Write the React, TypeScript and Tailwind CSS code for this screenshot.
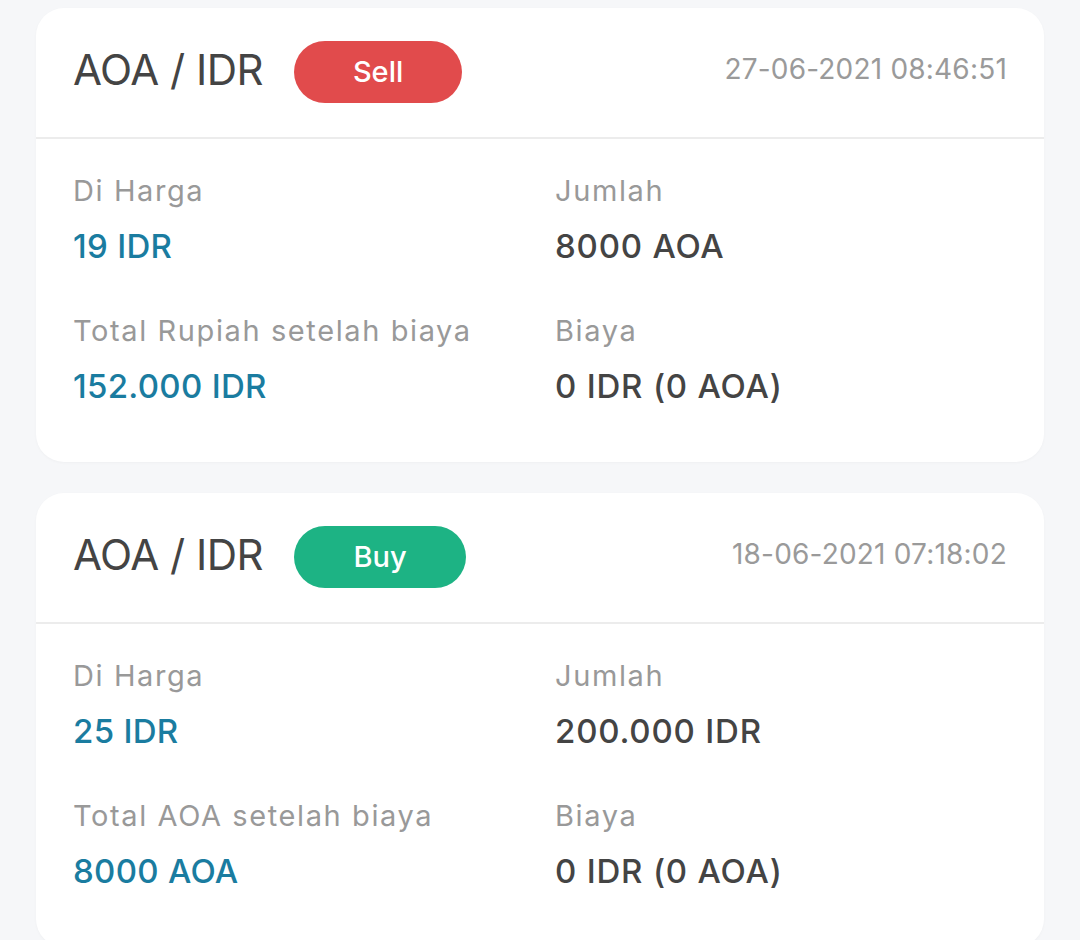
import React from "react";

type Row = { label: string; value: string; accent?: boolean };
type Trade = {
  side: "Sell" | "Buy";
  date: string;
  rows: Row[];
};

const trades: Trade[] = [
  {
    side: "Sell",
    date: "27-06-2021 08:46:51",
    rows: [
      { label: "Di Harga", value: "19 IDR", accent: true },
      { label: "Jumlah", value: "8000 AOA" },
      { label: "Total Rupiah setelah biaya", value: "152.000 IDR", accent: true },
      { label: "Biaya", value: "0 IDR (0 AOA)" },
    ],
  },
  {
    side: "Buy",
    date: "18-06-2021 07:18:02",
    rows: [
      { label: "Di Harga", value: "25 IDR", accent: true },
      { label: "Jumlah", value: "200.000 IDR" },
      { label: "Total AOA setelah biaya", value: "8000 AOA", accent: true },
      { label: "Biaya", value: "0 IDR (0 AOA)" },
    ],
  },
];

function Card({ t }: { t: Trade }) {
  return (
    <div className="bg-white rounded-[28px] shadow-[0_1px_3px_rgba(0,0,0,0.03)]">
      <div className="flex items-start justify-between pl-[37px] pr-[37px] pt-[33px] pb-[34px] border-b-2 border-[#ececec]">
        <div className="flex items-start">
          <span className="text-[42px] leading-[57px] text-[#444444] tracking-[-0.5px]">AOA / IDR</span>
          <span
            className={
              t.side === "Sell"
                ? "ml-[31px] h-[62px] w-[168px] rounded-full bg-[#e14b4c] text-white text-[29px] flex items-center justify-center font-medium"
                : "ml-[31px] h-[62px] w-[172px] rounded-full bg-[#1db384] text-white text-[29px] flex items-center justify-center font-medium"
            }
          >
            {t.side}
          </span>
        </div>
        <span className="text-[28px] leading-[57px] text-[#9a9a9a] tracking-[0.2px]">{t.date}</span>
      </div>
      <div className="grid grid-cols-[482px_1fr] gap-y-[43px] pl-[37px] pr-[37px] pt-[32px] pb-[54px]">
        {t.rows.map((r, i) => (
          <div key={i} className="flex flex-col gap-[13px]">
            <span className="text-[29px] leading-[40px] text-[#999999] tracking-[1.6px]">{r.label}</span>
            <span
              className={
                r.accent
                  ? "text-[33px] leading-[44px] text-[#1a7ca0] font-medium tracking-[0.3px]"
                  : "text-[33px] leading-[44px] text-[#444444] font-medium tracking-[0.8px]"
              }
            >
              {r.value}
            </span>
          </div>
        ))}
      </div>
    </div>
  );
}

export default function App() {
  return (
    <div
      className="w-[1080px] h-[940px] overflow-hidden bg-[#f6f7f9] pl-[36px] pr-[36px] pt-[8px] flex flex-col gap-[31px]"
      style={{ fontFamily: "Inter, 'Noto Sans', sans-serif" }}
    >
      {trades.map((t, i) => (
        <Card key={i} t={t} />
      ))}
    </div>
  );
}
